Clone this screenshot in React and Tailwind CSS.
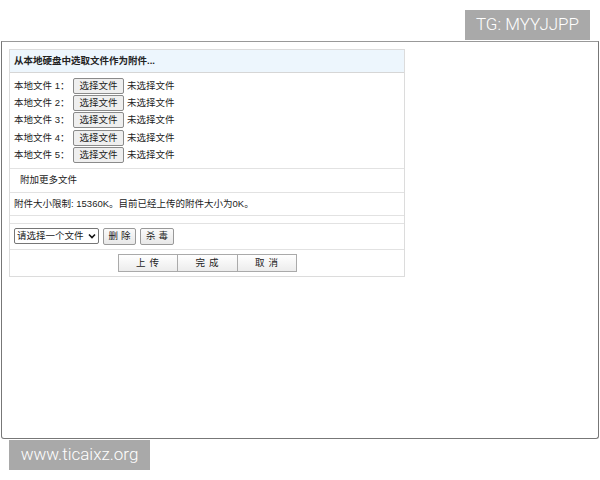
export default function App() {
  const font = { fontFamily: '"Liberation Sans", "Noto Sans CJK SC", sans-serif' };
  const rows = [1, 2, 3, 4, 5];
  return (
    <div className="relative w-[600px] h-[480px] bg-white overflow-hidden" style={font}>
      <div className="absolute top-[10px] left-[465px] w-[125px] h-[30px] bg-[#a9a9a9] text-white text-[17px] flex items-center justify-center font-light" style={{ fontFamily: 'Roboto, "Liberation Sans", sans-serif' }}>
        TG: MYYJJPP
      </div>
      <div className="pt-[41px] px-[1px]">
        <div className="h-[398px] border border-[#777] border-t-[#999] rounded-b-[3px] pt-[7px] pl-[7px] text-[9.5px] text-[#222]">
          <div className="w-[396px] border border-[#dcdcdc]">
            <div className="h-[23px] bg-[#edf6fd] border-b border-[#d6d6d6] flex items-center pl-[4px] font-bold">
              从本地硬盘中选取文件作为附件...
            </div>
            <div className="pt-[4px] pb-[4px] border-b border-[#e2e2e2] pl-[4px]">
              {rows.map((n) => (
                <div key={n} className="h-[17.4px] flex items-center whitespace-nowrap">
                  <span className="w-[59px] shrink-0">本地文件 {n}：</span>
                  <span className="w-[51px] h-[16px] shrink-0 border border-[#8a8a8a] rounded-[2px] bg-[#efefef] flex items-center justify-center">选择文件</span>
                  <span className="ml-[3px]">未选择文件</span>
                </div>
              ))}
            </div>
            <div className="h-[24px] border-b border-[#e2e2e2] flex items-center pl-[10px]">附加更多文件</div>
            <div className="h-[23px] border-b border-[#e2e2e2] flex items-center pl-[4px] whitespace-nowrap">
              附件大小限制: 15360K。目前已经上传的附件大小为0K。
            </div>
            <div className="h-[8px] border-b border-[#e2e2e2]"></div>
            <div className="h-[26px] border-b border-[#e2e2e2] flex items-center pl-[4px] gap-[4px] whitespace-nowrap">
              <div className="w-[85px] h-[16px] border border-[#767676] rounded-[2px] bg-white flex items-center pl-[2px] justify-between pr-[2px]">
                <span>请选择一个文件</span>
                <svg width="8" height="6" viewBox="0 0 8 6"><path d="M1 1.5 L4 4.5 L7 1.5" stroke="#111" strokeWidth="1.6" fill="none" /></svg>
              </div>
              <span className="w-[33px] h-[17px] border border-[#999] rounded-[2px] bg-gradient-to-b from-[#fafafa] to-[#e8e8e8] flex items-center justify-center tracking-[3px] pl-[3px]">删除</span>
              <span className="w-[34px] h-[17px] border border-[#999] rounded-[2px] bg-gradient-to-b from-[#fafafa] to-[#e8e8e8] flex items-center justify-center tracking-[3px] pl-[3px]">杀毒</span>
            </div>
            <div className="h-[26px] flex items-center justify-center">
              <div className="flex">
                <span className="w-[60px] h-[18px] border border-[#aaa] bg-gradient-to-b from-white to-[#ececec] flex items-center justify-center tracking-[4px] pl-[4px]">上传</span>
                <span className="w-[60px] h-[18px] border border-l-0 border-[#aaa] bg-gradient-to-b from-white to-[#ececec] flex items-center justify-center tracking-[4px] pl-[4px]">完成</span>
                <span className="w-[59px] h-[18px] border border-l-0 border-[#aaa] bg-gradient-to-b from-white to-[#ececec] flex items-center justify-center tracking-[4px] pl-[4px]">取消</span>
              </div>
            </div>
          </div>
        </div>
      </div>
      <div className="absolute top-[440px] left-[9px] w-[141px] h-[30px] bg-[#a9a9a9] text-white text-[17px] flex items-center justify-center font-light" style={{ fontFamily: 'Roboto, "Liberation Sans", sans-serif' }}>
        www.ticaixz.org
      </div>
    </div>
  );
}
